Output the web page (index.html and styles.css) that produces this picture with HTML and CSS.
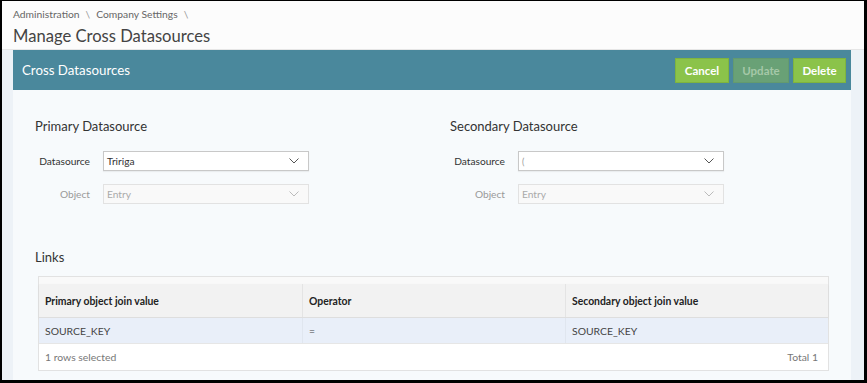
FILE: index.html
```html
<!DOCTYPE html>
<html>
<head>
<meta charset="utf-8">
<link rel="stylesheet" href="styles.css">
</head>
<body>
<div class="frame">
  <header class="page-head">
    <div class="crumbs"><span>Administration</span><span class="sep">\</span><span>Company Settings</span><span class="sep">\</span></div>
    <h1 class="title">Manage Cross Datasources</h1>
  </header>
  <main class="main">
    <section class="panel">
      <div class="panel-bar">
        <div class="panel-title">Cross Datasources</div>
        <div class="actions">
          <button class="btn btn-cancel">Cancel</button>
          <button class="btn btn-update" disabled>Update</button>
          <button class="btn btn-delete">Delete</button>
        </div>
      </div>
      <div class="panel-body">
        <div class="columns">
          <div class="col">
            <h2 class="sub">Primary Datasource</h2>
            <div class="row">
              <label class="lbl">Datasource</label>
              <div class="select"><span>Tririga</span><svg class="chev" width="10" height="6" viewBox="0 0 10 6"><path d="M0.5 0.5 L5 5 L9.5 0.5" fill="none" stroke="currentColor" stroke-width="1"/></svg></div>
            </div>
            <div class="row">
              <label class="lbl dis">Object</label>
              <div class="select disabled"><span>Entry</span><svg class="chev" width="10" height="6" viewBox="0 0 10 6"><path d="M0.5 0.5 L5 5 L9.5 0.5" fill="none" stroke="currentColor" stroke-width="1"/></svg></div>
            </div>
          </div>
          <div class="col col-right">
            <h2 class="sub">Secondary Datasource</h2>
            <div class="row">
              <label class="lbl">Datasource</label>
              <div class="select"><span class="caret">(</span><svg class="chev" width="10" height="6" viewBox="0 0 10 6"><path d="M0.5 0.5 L5 5 L9.5 0.5" fill="none" stroke="currentColor" stroke-width="1"/></svg></div>
            </div>
            <div class="row">
              <label class="lbl dis">Object</label>
              <div class="select disabled"><span>Entry</span><svg class="chev" width="10" height="6" viewBox="0 0 10 6"><path d="M0.5 0.5 L5 5 L9.5 0.5" fill="none" stroke="currentColor" stroke-width="1"/></svg></div>
            </div>
          </div>
        </div>
        <h2 class="sub links">Links</h2>
        <div class="grid">
          <div class="grid-top"></div>
          <div class="grid-head">
            <div class="cell">Primary object join value</div>
            <div class="cell">Operator</div>
            <div class="cell">Secondary object join value</div>
          </div>
          <div class="grid-row">
            <div class="cell">SOURCE_KEY</div>
            <div class="cell">=</div>
            <div class="cell">SOURCE_KEY</div>
          </div>
          <div class="grid-foot">
            <span>1 rows selected</span>
            <span>Total 1</span>
          </div>
        </div>
      </div>
    </section>
  </main>
</div>
</body>
</html>
```
FILE: styles.css
```css
html, body { margin: 0; height: 100%; }
body {
  background: #000;
  padding: 1px 3px 3px 2px;
  box-sizing: border-box;
  font-family: "Lato", "Open Sans", "Noto Sans", sans-serif;
  color: #333;
}
.frame {
  height: 100%;
  background: #fcfcfc;
  display: flex;
  flex-direction: column;
}
.page-head {
  padding: 0 11px;
  border-bottom: 1px solid #e6e6e6;
  box-sizing: border-box;
  height: 49px;
  flex: none;
}
.crumbs {
  font-size: 10.3px;
  color: #666;
  line-height: 14px;
  padding-top: 6px;
  display: flex;
  gap: 6px;
}
.crumbs .sep { color: #999; }
.title {
  margin: 4px 0 0;
  font-size: 16.6px;
  font-weight: 400;
  color: #444;
  line-height: 22px;
}
.main {
  flex: 1;
  background: #edf2f7;
  padding: 0 13px 0 11px;
  display: flex;
  min-width: 0;
}
.panel {
  flex: 1;
  min-width: 0;
  background: #f7fafc;
  display: flex;
  flex-direction: column;
}
.panel-bar {
  height: 40px;
  background: #4a889c;
  display: flex;
  align-items: center;
  justify-content: space-between;
  padding: 0 5px 0 9px;
  flex: none;
}
.panel-title {
  color: #fff;
  font-size: 13.3px;
}
.actions { display: flex; gap: 4px; }
.btn {
  height: 25px;
  border: 1px solid #7fb43e;
  background: #8bc34a;
  color: #fff;
  font-family: inherit;
  font-weight: 700;
  font-size: 11.5px;
  padding: 0;
}
.btn-cancel { width: 54px; }
.btn-update { width: 56px; background: #69a176; border-color: #639a6f; color: #a5c8a8; }
.btn-delete { width: 53px; }
.panel-body {
  padding: 26px 22px 0 22px;
}
.columns { display: flex; }
.col { width: 415px; flex: none; }
.col-right { flex: 1; width: auto; min-width: 0; }
.sub {
  margin: 0;
  font-size: 13px;
  font-weight: 400;
  line-height: 20px;
  color: #333;
}
.col .sub { margin-bottom: 15px; }
.row {
  display: flex;
  align-items: center;
  gap: 13px;
  margin-bottom: 13px;
}
.lbl {
  width: 55px;
  text-align: right;
  font-size: 10.2px;
  color: #333;
}
.lbl.dis { color: #999; }
.select {
  width: 206px;
  height: 20px;
  box-sizing: border-box;
  border: 1px solid #c8c8c8;
  background: #fff;
  box-shadow: 0 1px 1px rgba(0,0,0,0.05);
  display: flex;
  align-items: center;
  justify-content: space-between;
  padding: 0 9px 0 3px;
  font-size: 10.2px;
  color: #333;
}
.select .chev { color: #555; }
.select .caret { color: #999; font-size: 9px; }
.select.disabled {
  background: #f9f9f9;
  border-color: #e2e2e2;
  color: #aaa;
  box-shadow: none;
}
.select.disabled .chev { color: #bbb; }
.links { margin-top: 30px; }
.grid {
  margin: 9px 0 0 3px;
  border: 1px solid #e2e2e2;
  background: #fff;
  font-size: 10.4px;
}
.grid-top { height: 7px; background: #f9f9f9; }
.grid-head, .grid-row {
  display: grid;
  grid-template-columns: 263px 263px 1fr;
}
.grid-head {
  height: 33px;
  background: #f2f2f2;
  font-weight: 700;
  color: #222;
  border-bottom: 1px solid #dedede;
  box-shadow: 0 1px 2px rgba(0,0,0,0.06);
}
.grid-head .cell, .grid-row .cell {
  display: flex;
  align-items: center;
  padding-left: 6px;
  border-left: 1px solid #e4e4e4;
}
.grid-head .cell:first-child, .grid-row .cell:first-child { border-left: none; padding-left: 6px; }
.grid-row {
  height: 25px;
  background: #e9eff9;
  color: #444;
}
.grid-row .cell { border-left-color: #e0e6ef; }
.grid-foot {
  height: 26px;
  border-top: 1px solid #e6e6e6;
  display: flex;
  align-items: center;
  justify-content: space-between;
  padding: 0 10px 0 6px;
  color: #777;
}
```
